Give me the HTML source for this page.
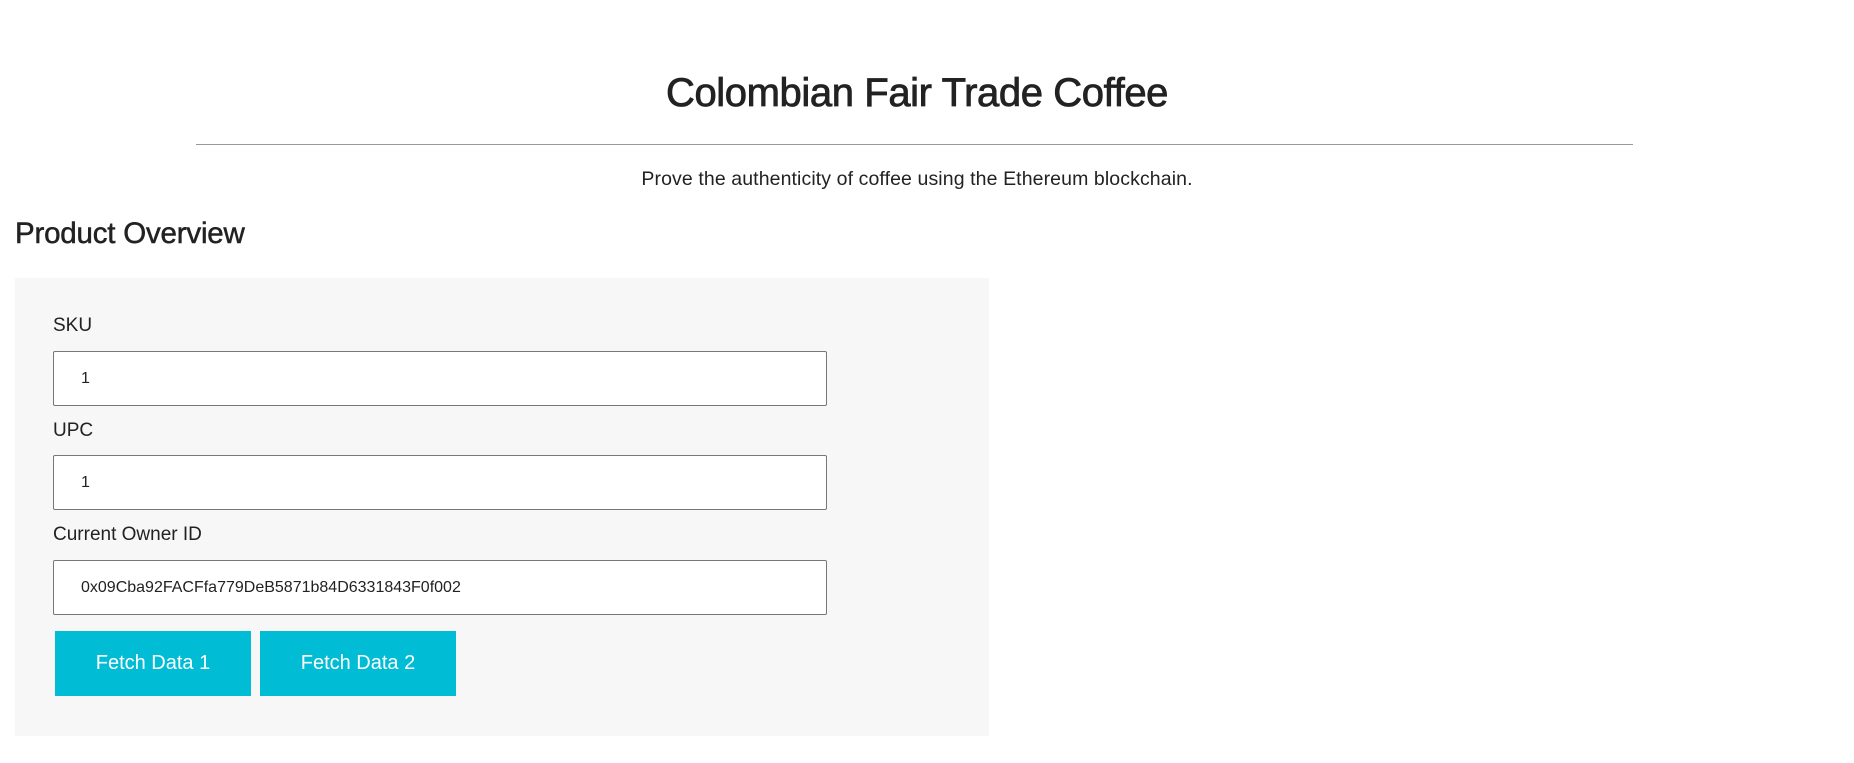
<!DOCTYPE html>
<html><head><meta charset="utf-8"><style>
body{margin:0;background:#fff;font-family:"Liberation Sans",Roboto,sans-serif;color:#222;width:1854px;height:763px;overflow:hidden;position:relative}
.a{position:absolute}
h1{position:absolute;left:0;width:1834px;top:66px;margin:0;text-align:center;font-size:40px;font-weight:normal;letter-spacing:-0.4px;-webkit-text-stroke:0.8px #222;line-height:54px}
.hr{left:196px;width:1437px;top:144px;height:1px;background:#999}
.sub{left:0;width:1834px;top:167px;text-align:center;font-size:19.5px;letter-spacing:0.1px;line-height:24px}
.po{left:15px;top:216px;font-size:29.5px;letter-spacing:-0.2px;-webkit-text-stroke:0.5px #222;line-height:36px}
.panel{left:15px;top:278px;width:974px;height:458px;background:#f7f7f7}
.lbl{left:53px;font-size:19px;line-height:24px}
.inp{left:53px;background:#fff;border:1px solid #777;border-radius:2px;font-family:"Liberation Sans",Arial,sans-serif;font-size:16px;line-height:53px;padding-left:27px;box-sizing:border-box;width:774px;height:55px}
.btn{top:631px;width:196px;height:65px;background:#00bcd4;color:#fff;font-size:20px;line-height:65px;text-align:center}
</style></head><body>
<h1>Colombian Fair Trade Coffee</h1>
<div class="a hr"></div>
<div class="a sub">Prove the authenticity of coffee using the Ethereum blockchain.</div>
<div class="a po">Product Overview</div>
<div class="a panel"></div>
<div class="a lbl" style="top:314px">SKU</div>
<div class="a inp" style="top:351px">1</div>
<div class="a lbl" style="top:419px">UPC</div>
<div class="a inp" style="top:455px">1</div>
<div class="a lbl" style="top:523px">Current Owner ID</div>
<div class="a inp" style="top:560px">0x09Cba92FACFfa779DeB5871b84D6331843F0f002</div>
<div class="a btn" style="left:55px">Fetch Data 1</div>
<div class="a btn" style="left:260px">Fetch Data 2</div>
</body></html>
